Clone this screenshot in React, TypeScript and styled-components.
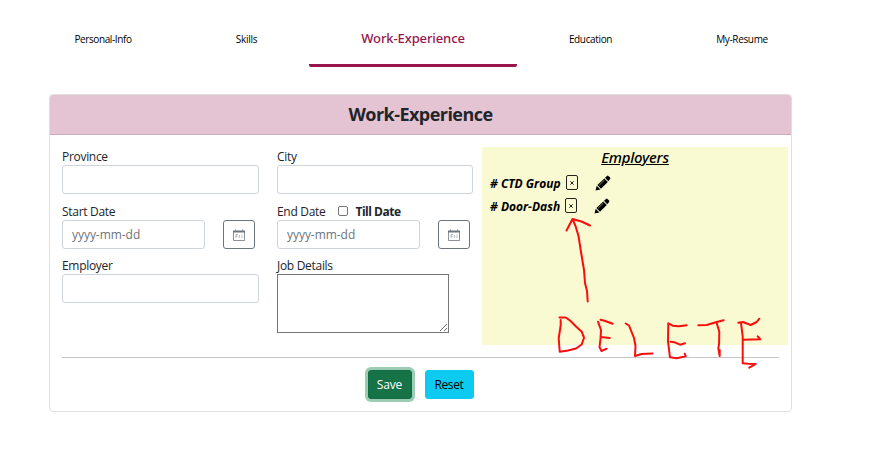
import React from 'react';
import styled, { createGlobalStyle, css } from 'styled-components';

const Global = createGlobalStyle`
  * { box-sizing: border-box; }
  body { margin: 0; background: #fff; color: #212529; font: 12px/18px "Segoe UI", "Open Sans", "Noto Sans", sans-serif; }
  input, textarea, button { font: inherit; color: inherit; margin: 0; }
`;
const Page = styled.div`
  position: relative;
  width: 896px;
  height: 450px;
  padding-left: 49px;
  overflow: hidden;
`;
const Tabs = styled.nav`
  display: grid;
  grid-template-columns: 108px 179px 154px 201px 102px;
  width: 744px;
  height: 67px;
`;
const Tab = styled.a<{ $active?: boolean; $spacing: number }>`
  display: flex;
  justify-content: center;
  padding-top: 31px;
  font-size: 10px;
  line-height: 16px;
  letter-spacing: ${p => p.$spacing}px;
  color: #000;
  white-space: nowrap;
  ${p => p.$active && css`
    width: 208px;
    margin-left: -27px;
    padding-top: 30px;
    font-family: "Segoe UI", "Noto Sans", sans-serif;
    font-size: 13px;
    font-weight: 500;
    color: #97144d;
    border-bottom: 3px solid #97144d;
    border-radius: 2px;
  `}
`;
const Card = styled.section`
  width: 743px;
  height: 318px;
  margin-top: 27px;
  border: 1px solid #dfdfdf;
  border-radius: 4px;
  overflow: hidden;
`;
const CardTitle = styled.h1`
  height: 40px;
  margin: 0;
  border-bottom: 1px solid #c9adba;
  background: #e4c4d3;
  text-align: center;
  font-size: 18px;
  line-height: 39px;
  font-weight: 700;
  letter-spacing: -0.55px;
`;
const Body = styled.div`
  display: grid;
  grid-template-columns: 197px 196px 306px;
  column-gap: 18px;
  padding: 12px 0 0 12px;
  height: 222px;
`;
const Column = styled.div``;
const Field = styled.div<{ $h?: number }>`
  height: ${p => p.$h ?? 55}px;
`;
const Label = styled.label`
  display: flex;
  align-items: center;
  height: 18px;
  padding-top: 2px;
  letter-spacing: -0.3px;
  white-space: nowrap;
`;
const Bold = styled.b`
  letter-spacing: -0.5px;
`;
const Input = styled.input`
  display: block;
  width: 100%;
  height: 29px;
  padding: 0 9px;
  border: 1px solid #ced4da;
  border-radius: 3px;
  background: #fff;
  outline: 0;
  &::placeholder { color: #6c757d; opacity: 1; letter-spacing: -0.05px; }
`;
const DateRow = styled.div`
  display: grid;
  grid-template-columns: 143px 32px;
  column-gap: 18px;
`;
const DateButton = styled.button`
  display: grid;
  place-items: center;
  height: 29px;
  padding: 0;
  border: 1px solid #6c757d;
  border-radius: 3px;
  background: #fff;
`;
const Check = styled.input`
  appearance: none;
  width: 10px;
  height: 10px;
  margin: -2px 7px 0 13px;
  border: 1px solid #767676;
  border-radius: 2px;
  background: #fff;
`;
const Details = styled.textarea`
  display: block;
  width: 172px;
  height: 59px;
  border: 1px solid #767676;
  outline: 0;
  resize: both;
`;
const Employers = styled.aside`
  width: 306px;
  height: 198px;
  margin-left: -9px;
  background: #f9f9d2;
  color: #000;
`;
const EmployersTitle = styled.h2`
  height: 25px;
  margin: 0;
  text-align: center;
  font-family: "Segoe UI", "Noto Sans", sans-serif;
  font-size: 15px;
  line-height: 20px;
  font-weight: 500;
  font-style: italic;
  letter-spacing: -0.25px;
  text-decoration: underline;
`;
const Employer = styled.div`
  display: flex;
  align-items: center;
  height: 23px;
  padding-left: 8px;
`;
const EmployerName = styled.span<{ $w: number }>`
  width: ${p => p.$w}px;
  font-weight: 700;
  font-style: italic;
  letter-spacing: 0;
  white-space: nowrap;
`;
const Remove = styled.button`
  display: grid;
  place-items: center;
  width: 12px;
  height: 15px;
  margin: -2px 17px 0 0;
  padding: 0;
  border: 1px solid #222;
  border-radius: 2px;
  background: transparent;
`;
const Footer = styled.footer`
  display: flex;
  justify-content: center;
  gap: 13px;
  width: 717px;
  margin-left: 12px;
  padding-top: 12px;
  border-top: 1px solid #c5c6c7;
`;
const Button = styled.button<{ $primary?: boolean }>`
  width: ${p => (p.$primary ? 44 : 49)}px;
  height: 29px;
  padding: 1px 0 0;
  border: 1px solid ${p => (p.$primary ? '#146c43' : '#0dcaf0')};
  border-radius: 3px;
  background: ${p => (p.$primary ? '#157347' : '#0dcaf0')};
  color: ${p => (p.$primary ? '#fff' : '#000')};
  box-shadow: ${p => (p.$primary ? '0 0 0 3px #9dccb5' : 'none')};
  letter-spacing: ${p => (p.$primary ? -0.15 : -0.35)}px;
`;
const Annotation = styled.svg`
  position: absolute;
  left: 540px;
  top: 205px;
  pointer-events: none;
`;
const Pencil = styled.svg`
  margin-top: -2px;
`;

const CalendarIcon = () => (
  <svg width="12" height="12" viewBox="0 0 12 12" fill="none" stroke="#6c757d">
    <path d="M.5 2.500h11v9H.5z" strokeWidth=".8" />
    <path d="M0 2.500h12" strokeWidth="2" />
    <path d="M2.500 .5v1M9.500 .5v1" />
    <path d="M3 9V5.500h2M3 7.200h1.500M6.200 9V6.500h1M9 6.500V9M9 5v.7" strokeWidth=".5" />
  </svg>
);
const PencilIcon = () => (
  <Pencil width="16" height="16" viewBox="0 0 16 16" fill="#000">
    <path d="M.5 15.500 1.700 10.800l3.700 3.700zM2.400 10.100 9.300 3.400l3.500 3.500-6.800 6.900zM10 2.800l2-1.900q.7-.6 1.400 0l1.700 1.700q.6.7 0 1.400l-1.800 2.200z" />
    <path d="m4.200 10.200 5.200-5.200" stroke="#f9f9d2" strokeWidth=".5" />
  </Pencil>
);
const CrossIcon = () => (
  <svg width="4" height="4" viewBox="0 0 4 4" stroke="#222">
    <path d="m.3.3 3.400 3.400M3.700.3.3 3.700" />
  </svg>
);

const tabs = [
  { name: 'Personal-Info', spacing: -0.4 },
  { name: 'Skills', spacing: -0.25 },
  { name: 'Work-Experience', spacing: -0.1, active: true },
  { name: 'Education', spacing: -0.35 },
  { name: 'My-Resume', spacing: -0.35 },
];
const employers = [{ name: 'CTD Group', width: 76 }, { name: 'Door-Dash', width: 75 }];

const DateInput = () => (
  <DateRow>
    <Input placeholder="yyyy-mm-dd" />
    <DateButton aria-label="Choose date"><CalendarIcon /></DateButton>
  </DateRow>
);

export default function App() {
  return (
    <Page>
      <Global />
      <Tabs>
        {tabs.map(t => <Tab key={t.name} $active={t.active} $spacing={t.spacing}>{t.name}</Tab>)}
      </Tabs>
      <Card>
        <CardTitle>Work-Experience</CardTitle>
        <Body>
          <Column>
            <Field><Label>Province</Label><Input /></Field>
            <Field $h={54}><Label>Start Date</Label><DateInput /></Field>
            <Field><Label>Employer</Label><Input /></Field>
          </Column>
          <Column>
            <Field><Label>City</Label><Input /></Field>
            <Field $h={54}><Label>End Date<Check type="checkbox" /><Bold>Till Date</Bold></Label><DateInput /></Field>
            <Field><Label>Job Details</Label><Details /></Field>
          </Column>
          <Employers>
            <EmployersTitle>Employers</EmployersTitle>
            {employers.map(e => (
              <Employer key={e.name}>
                <EmployerName $w={e.width}># {e.name}</EmployerName>
                <Remove aria-label="Delete"><CrossIcon /></Remove>
                <PencilIcon />
              </Employer>
            ))}
          </Employers>
        </Body>
        <Footer><Button $primary>Save</Button><Button>Reset</Button></Footer>
      </Card>
      <Annotation width="225" height="170" viewBox="0 0 225 170" fill="none" stroke="#fb0d0d" strokeWidth="2" strokeLinecap="round" strokeLinejoin="round">
        <path d="M47.700 96.500 47 86 45 78 44 65 41 47 38.500 31 35.500 21 32.500 14M26.500 25.500l6-11.500 9 2.500 8.500 4" />
        <path d="M19.500 112.500h6.200l4.300 3 6 6 5.700 5.200 2.300 6-2.300 6.800-5.700 4-8 2-8.300 1.200-1-13.700 1.300-8 .7-5v-5" />
        <path d="M60.500 114.700l4 1 8.200 3M58 116.700l3 8.300-.5 9-1 8 2 4 5.200-2.300M61 132l8.700 1" />
        <path d="M85.700 118.500l3.300 2 5 12.500 1.500 8-.5 10 6.500-2 11-.5" />
        <path d="M146.700 120.300l-8 1-6-.6-4.400-2.400-.3 18.400 2 15.600 6.700 1 9-2-1-2.600M130.700 136.700l4 .6 5.300 2.400 5-1.400" />
        <path d="M158.300 120.300l8.400-.3 10-3 7-1.700M176.700 118l2.600 8.700-.2 12-.8 4.600 1.400 7.700v-6" />
        <path d="M198.300 117.700l4.700-.7 7.700 3 6-3 2.600-3.300M201 118l1.700 13.700v26.600l5.300.4 7.700.3-6.400 3.700M203.300 134.700l17-.4-2.600-3" />
      </Annotation>
    </Page>
  );
}
